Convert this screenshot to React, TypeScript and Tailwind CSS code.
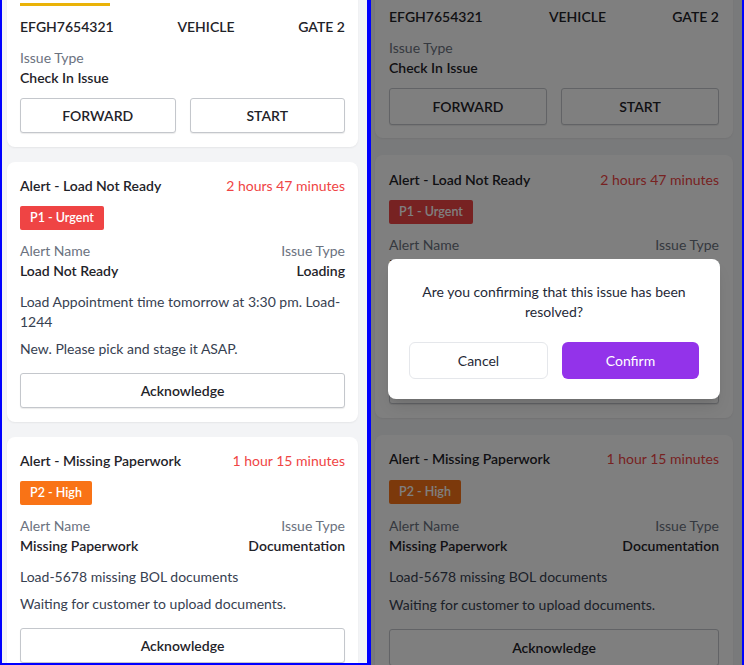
import React from "react";

const FONT = { fontFamily: 'Lato, "Noto Sans", sans-serif' };

function OutlineButton({ label, tall }: { label: string; tall: boolean }) {
  return (
    <div
      className={`flex-1 flex items-center justify-center border border-[#c4c7cc] rounded-[3px] bg-white text-[14px] font-semibold text-[#1f2329] shadow-[0_1px_1px_rgba(0,0,0,0.08)] ${
        tall ? "h-[37px]" : "h-[35px]"
      }`}
    >
      {label}
    </div>
  );
}

function AlertCard({
  title,
  time,
  badge,
  badgeClass,
  name,
  type,
  lines,
  tall,
  loose,
  topPad,
}: {
  title: string;
  time: string;
  badge: string;
  badgeClass: string;
  name: string;
  type: string;
  lines: string[];
  tall: boolean;
  loose: boolean;
  topPad: string;
}) {
  return (
    <div className={`bg-white rounded-lg shadow-[0_1px_2px_rgba(0,0,0,0.06)] ${tall ? "px-[14px]" : "px-[13px]"} ${topPad} pb-[14px]`}>
      <div className="flex justify-between items-center leading-[20px] text-[14px]">
        <span className="font-semibold text-[#1f2329]">{title}</span>
        <span className="text-[#ef4444]">{time}</span>
      </div>
      <div className={`${loose ? "mt-[11px]" : "mt-[10px]"} flex`}>
        <span className={`h-[24px] px-[10px] flex items-center rounded-[2px] text-white text-[12.5px] font-semibold ${badgeClass}`}>
          {badge}
        </span>
      </div>
      <div className={`${loose ? "mt-[12px]" : "mt-[11px]"} flex justify-between text-[14px] leading-[20px]`}>
        <span className="text-[#6b7280]">Alert Name</span>
        <span className="text-[#6b7280]">Issue Type</span>
      </div>
      <div className="flex justify-between text-[14px] leading-[20px] font-semibold text-[#1f2329]">
        <span>{name}</span>
        <span>{type}</span>
      </div>
      <div className={`${loose ? "mt-[11px] gap-[8px]" : "mt-[11px] gap-[7px]"} text-[14px] leading-[20px] text-[#374151] flex flex-col`}>
        {lines.map((l) => (
          <p key={l}>{l}</p>
        ))}
      </div>
      <div className="mt-[14px] flex">
        <OutlineButton label="Acknowledge" tall={tall} />
      </div>
    </div>
  );
}

function Feed({ right }: { right: boolean }) {
  return (
    <div className={`flex flex-col ${right ? "gap-[17px] ml-[4px] mr-[9px] -mt-[20px]" : "gap-[15px] ml-[5px] mr-[9px] -mt-[10px]"}`}>
      <div className={`bg-white rounded-lg shadow-[0_1px_2px_rgba(0,0,0,0.06)] pt-[13px] ${right ? "px-[14px] pb-[13px]" : "px-[13px] pb-[14px]"}`}>
        <div className="h-[3px] w-[90px] bg-[#eab308]" />
        <div className="mt-[11px] flex justify-between text-[14px] leading-[20px] font-semibold text-[#1f2329]">
          <span>EFGH7654321</span>
          <span>VEHICLE</span>
          <span>GATE 2</span>
        </div>
        <div className="mt-[11px] text-[14px] leading-[20px] text-[#6b7280]">Issue Type</div>
        <div className="text-[14px] leading-[20px] font-semibold text-[#1f2329]">Check In Issue</div>
        <div className="mt-[10px] flex gap-[14px]">
          <OutlineButton label="FORWARD" tall={right} />
          <OutlineButton label="START" tall={right} />
        </div>
      </div>
      <AlertCard
        title="Alert - Load Not Ready"
        time="2 hours 47 minutes"
        badge="P1 - Urgent"
        badgeClass="bg-[#ef4444]"
        name="Load Not Ready"
        type="Loading"
        lines={["Load Appointment time tomorrow at 3:30 pm. Load-1244", "New. Please pick and stage it ASAP."]}
        tall={right}
        loose={false}
        topPad={right ? "pt-[15px]" : "pt-[14px]"}
      />
      <AlertCard
        title="Alert - Missing Paperwork"
        time="1 hour 15 minutes"
        badge="P2 - High"
        badgeClass="bg-[#f97316]"
        name="Missing Paperwork"
        type="Documentation"
        lines={["Load-5678 missing BOL documents", "Waiting for customer to upload documents."]}
        tall={right}
        loose={right}
        topPad="pt-[14px]"
      />
    </div>
  );
}

export default function App() {
  return (
    <div className="flex w-[744px] h-[665px] overflow-hidden bg-[#0000ff]" style={FONT}>
      <div className="w-[369px] h-[665px] border-l-2 border-r-2 border-b-2 border-[#0000ff] bg-[#f3f4f6] overflow-hidden">
        <Feed right={false} />
      </div>
      <div className="relative w-[375px] h-[665px] border-l-2 border-r-2 border-[#0000ff] bg-[#f3f4f6] overflow-hidden">
        <Feed right={true} />
        <div className="absolute inset-0 bg-black/50 flex items-center justify-center">
          <div className="w-[332px] mr-[5px] mb-[7px] bg-white rounded-lg px-[21px] pt-[23px] pb-[20px] shadow-lg">
            <p className="text-center text-[14px] leading-[20px] text-[#1f2937] px-[10px]">
              Are you confirming that this issue has been resolved?
            </p>
            <div className="mt-[20px] flex gap-[14px]">
              <div className="flex-1 h-[37px] flex items-center justify-center rounded-md border border-[#e5e7eb] bg-white text-[14px] text-[#1f2937]">
                Cancel
              </div>
              <div className="flex-1 h-[37px] flex items-center justify-center rounded-md bg-[#9333ea] text-[14px] text-white">
                Confirm
              </div>
            </div>
          </div>
        </div>
      </div>
    </div>
  );
}
